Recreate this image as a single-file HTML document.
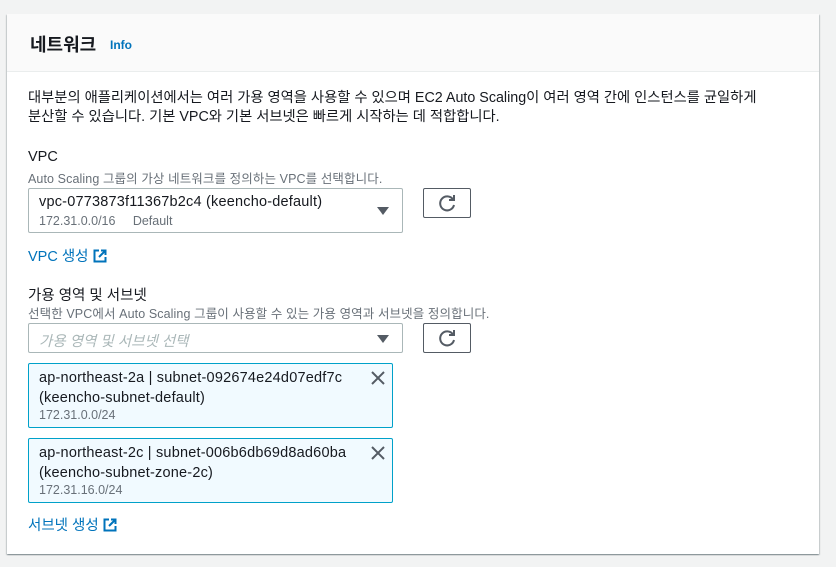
<!DOCTYPE html>
<html><head><meta charset="utf-8"><style>
*{box-sizing:border-box;margin:0;padding:0}
body{width:836px;height:567px;background:#f2f3f3;font-family:"Liberation Sans","Noto Sans CJK KR",sans-serif;color:#16191f;position:relative;overflow:hidden}
.card{position:absolute;left:7px;top:14px;width:812px;height:540px;background:#fff;box-shadow:0 1px 1px rgba(0,28,36,.3),1px 1px 1px rgba(0,28,36,.15),-1px 1px 1px rgba(0,28,36,.15)}
.hdr{height:58px;background:#fafafa;border-bottom:1px solid #eaeded;position:relative}
.a{position:absolute;white-space:nowrap}
.blue{color:#0073bb}
.sel{position:absolute;left:28px;width:375px;border:1px solid #aab7b8;border-radius:2px;background:#fff}
.btn{position:absolute;left:423px;width:48px;height:30px;border:1px solid #545b64;border-radius:2px;background:#fff}
.tok{position:absolute;left:28px;width:365px;height:65px;background:#f1faff;border:1px solid #00a1c9;border-radius:2px}
.tri{position:absolute;right:13px;width:0;height:0;border-left:6px solid transparent;border-right:6px solid transparent;border-top:8px solid #545b64}
.g{color:#687078}
.d{font-size:12.5px;letter-spacing:.1px}
</style></head><body>
<div class="card"><div class="hdr">
<div class="a" style="left:23px;top:17px;font-size:18px;font-weight:bold">네트워크</div>
<div class="a blue" style="left:103px;top:24px;font-size:12px;font-weight:bold">Info</div>
</div></div>
<div class="a" style="left:28px;top:89px;font-size:14.3px;line-height:19px">대부분의 애플리케이션에서는 여러 가용 영역을 사용할 수 있으며 EC2 Auto Scaling이 여러 영역 간에 인스턴스를 균일하게<br>분산할 수 있습니다. 기본 VPC와 기본 서브넷은 빠르게 시작하는 데 적합합니다.</div>
<div class="a" style="left:28px;top:149px;font-size:14.5px">VPC</div>
<div class="a g d" style="left:28px;top:168px">Auto Scaling 그룹의 가상 네트워크를 정의하는 VPC를 선택합니다.</div>
<div class="sel" style="top:188px;height:45px">
<div class="a" style="left:10px;top:5px;font-size:14.5px;letter-spacing:.2px">vpc-0773873f11367b2c4 (keencho-default)</div>
<div class="a g" style="left:10px;top:25px;font-size:12.5px">172.31.0.0/16 &nbsp;&nbsp;&nbsp;&nbsp;Default</div>
<div class="tri" style="top:18px"></div></div>
<div class="btn" style="top:188px"><svg width="46" height="28" viewBox="0 0 46 28"><path d="M29 10.5A7 7 0 1 0 30 16" fill="none" stroke="#545b64" stroke-width="2"/><path d="M30 6v5h-5" fill="none" stroke="#545b64" stroke-width="2"/></svg></div>
<div class="a blue" style="left:28px;top:245px;font-size:14.5px">VPC 생성 <svg width="14" height="14" viewBox="0 0 14 14" style="vertical-align:-2px"><path d="M6 1.5H1.5v11h11V8M8 1.5h4.5V6M12.5 1.5L6 8" fill="none" stroke="#0073bb" stroke-width="2"/></svg></div>
<div class="a" style="left:28px;top:284px;font-size:14.5px">가용 영역 및 서브넷</div>
<div class="a g d" style="left:28px;top:303px">선택한 VPC에서 Auto Scaling 그룹이 사용할 수 있는 가용 영역과 서브넷을 정의합니다.</div>
<div class="sel" style="top:323px;height:30px">
<div class="a" style="left:10px;top:6px;font-size:14.5px;font-style:italic;color:#aab7b8">가용 영역 및 서브넷 선택</div>
<div class="tri" style="top:11px"></div></div>
<div class="btn" style="top:323px"><svg width="46" height="28" viewBox="0 0 46 28"><path d="M29 10.5A7 7 0 1 0 30 16" fill="none" stroke="#545b64" stroke-width="2"/><path d="M30 6v5h-5" fill="none" stroke="#545b64" stroke-width="2"/></svg></div>
<div class="tok" style="top:363px">
<div class="a" style="left:10px;top:4px;font-size:14.5px;line-height:20px;letter-spacing:.2px">ap-northeast-2a | subnet-092674e24d07edf7c<br>(keencho-subnet-default)</div>
<div class="a g" style="left:10px;top:44px;font-size:12.5px">172.31.0.0/24</div>
<svg class="a" style="left:342px;top:7px" width="14" height="14"><path d="M1 1L13 13M13 1L1 13" stroke="#545b64" stroke-width="2"/></svg></div>
<div class="tok" style="top:438px">
<div class="a" style="left:10px;top:4px;font-size:14.5px;line-height:20px;letter-spacing:.2px">ap-northeast-2c | subnet-006b6db69d8ad60ba<br>(keencho-subnet-zone-2c)</div>
<div class="a g" style="left:10px;top:44px;font-size:12.5px">172.31.16.0/24</div>
<svg class="a" style="left:342px;top:7px" width="14" height="14"><path d="M1 1L13 13M13 1L1 13" stroke="#545b64" stroke-width="2"/></svg></div>
<div class="a blue" style="left:28px;top:514px;font-size:14.5px">서브넷 생성 <svg width="14" height="14" viewBox="0 0 14 14" style="vertical-align:-2px"><path d="M6 1.5H1.5v11h11V8M8 1.5h4.5V6M12.5 1.5L6 8" fill="none" stroke="#0073bb" stroke-width="2"/></svg></div>
</body></html>
